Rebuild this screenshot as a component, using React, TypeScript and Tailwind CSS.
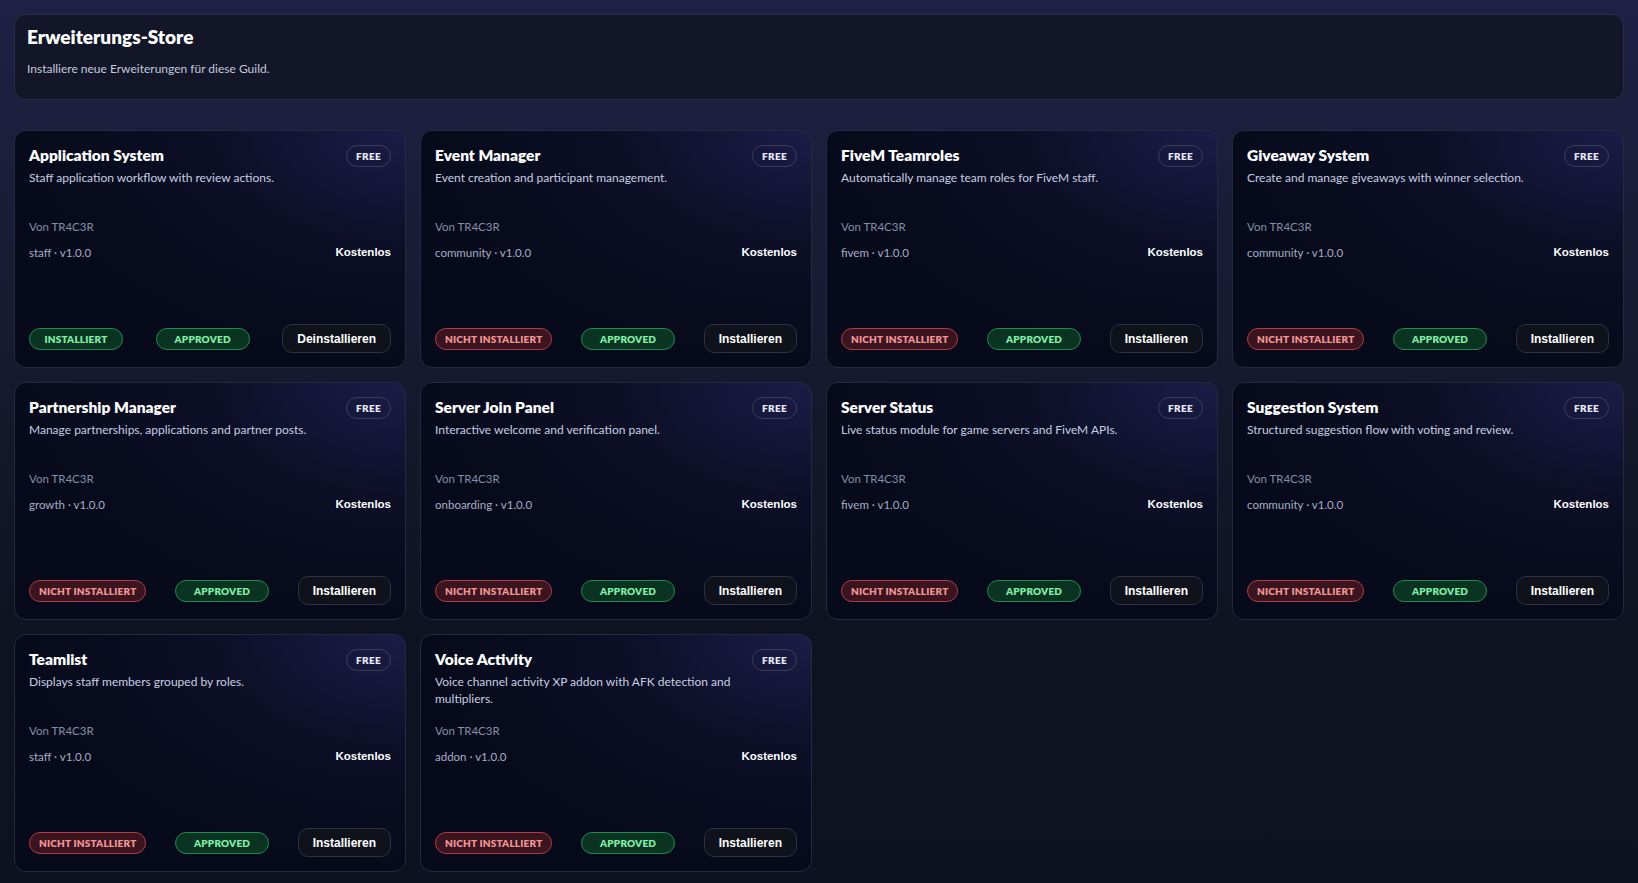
import React from "react";

type Ext = {
  name: string;
  desc: string;
  category: string;
  installed: boolean;
};

const extensions: Ext[] = [
  { name: "Application System", desc: "Staff application workflow with review actions.", category: "staff", installed: true },
  { name: "Event Manager", desc: "Event creation and participant management.", category: "community", installed: false },
  { name: "FiveM Teamroles", desc: "Automatically manage team roles for FiveM staff.", category: "fivem", installed: false },
  { name: "Giveaway System", desc: "Create and manage giveaways with winner selection.", category: "community", installed: false },
  { name: "Partnership Manager", desc: "Manage partnerships, applications and partner posts.", category: "growth", installed: false },
  { name: "Server Join Panel", desc: "Interactive welcome and verification panel.", category: "onboarding", installed: false },
  { name: "Server Status", desc: "Live status module for game servers and FiveM APIs.", category: "fivem", installed: false },
  { name: "Suggestion System", desc: "Structured suggestion flow with voting and review.", category: "community", installed: false },
  { name: "Teamlist", desc: "Displays staff members grouped by roles.", category: "staff", installed: false },
  { name: "Voice Activity", desc: "Voice channel activity XP addon with AFK detection and multipliers.", category: "addon", installed: false },
];

function ExtensionCard({ ext }: { ext: Ext }) {
  return (
    <div className="flex h-[238px] flex-col rounded-xl border border-[#262a3e] bg-[radial-gradient(ellipse_at_100%_0%,#1b1d48_0%,#0c0f26_35%,#060a1a_70%)] px-[14px] pt-[14px] pb-[14px]">
      <div className="flex items-start justify-between gap-3">
        <div className="min-w-0">
          <h3 className="text-[15.5px] leading-[20px] font-extrabold text-white">{ext.name}</h3>
          <p className="mt-[4px] min-h-[34px] text-[12px] leading-[17px] text-[#c8cee2]">{ext.desc}</p>
        </div>
        <span className="shrink-0 rounded-full border border-[#3a3f58] px-[9px] py-[4px] text-[10px] leading-[12px] font-extrabold tracking-[0.3px] text-[#e6e9f5]">
          FREE
        </span>
      </div>
      <div className="mt-[16px] text-[11.5px] leading-[16px] text-[#858ea8]">Von TR4C3R</div>
      <div className="mt-[9px] flex items-center justify-between">
        <span className="text-[11.5px] leading-[16px] text-[#a6aec6]">{ext.category} · v1.0.0</span>
        <span className="font-['Liberation_Sans',Arial,sans-serif] text-[11.5px] font-bold text-white">Kostenlos</span>
      </div>
      <div className="mt-auto flex items-center justify-between">
        {ext.installed ? (
          <span className="min-w-[94px] rounded-full border border-[#1f8a4c] bg-[#0b3322] px-[9px] py-[4px] text-center text-[10px] leading-[12px] font-extrabold tracking-[0.2px] text-[#7ff0a6]">
            INSTALLIERT
          </span>
        ) : (
          <span className="min-w-[94px] rounded-full border border-[#b23a44] bg-[#3a1520] px-[9px] py-[4px] text-center text-[10px] leading-[12px] font-extrabold tracking-[0.2px] text-[#f39393]">
            NICHT INSTALLIERT
          </span>
        )}
        <span className="min-w-[94px] rounded-full border border-[#1f8a4c] bg-[#0b3322] px-[9px] py-[4px] text-center text-[10px] leading-[12px] font-extrabold tracking-[0.2px] text-[#7ff0a6]">
          APPROVED
        </span>
        <button className="h-[29px] rounded-[10px] border border-[#2e3142] bg-[#10121b] px-[14px] font-['Liberation_Sans',Arial,sans-serif] text-[12px] font-bold text-white">
          {ext.installed ? "Deinstallieren" : "Installieren"}
        </button>
      </div>
    </div>
  );
}

export default function App() {
  return (
    <div className="min-h-screen bg-[linear-gradient(180deg,#1f2145_0%,#171a2f_40%,#0f1321_72%,#0e1220_100%)] px-[14px] pt-[14px] pb-[10px] font-['Lato','Noto_Sans',sans-serif] text-white">
      <div className="rounded-xl border border-[#2a2e44] bg-[#121628] px-[12px] pt-[10px] pb-[22px]">
        <h1 className="text-[19px] leading-[24px] font-extrabold text-white">Erweiterungs-Store</h1>
        <p className="mt-[12px] text-[12px] leading-[16px] text-[#c3c9de]">Installiere neue Erweiterungen für diese Guild.</p>
      </div>
      <div className="mt-[30px] grid grid-cols-4 gap-[14px]">
        {extensions.map((ext) => (
          <ExtensionCard key={ext.name} ext={ext} />
        ))}
      </div>
    </div>
  );
}
